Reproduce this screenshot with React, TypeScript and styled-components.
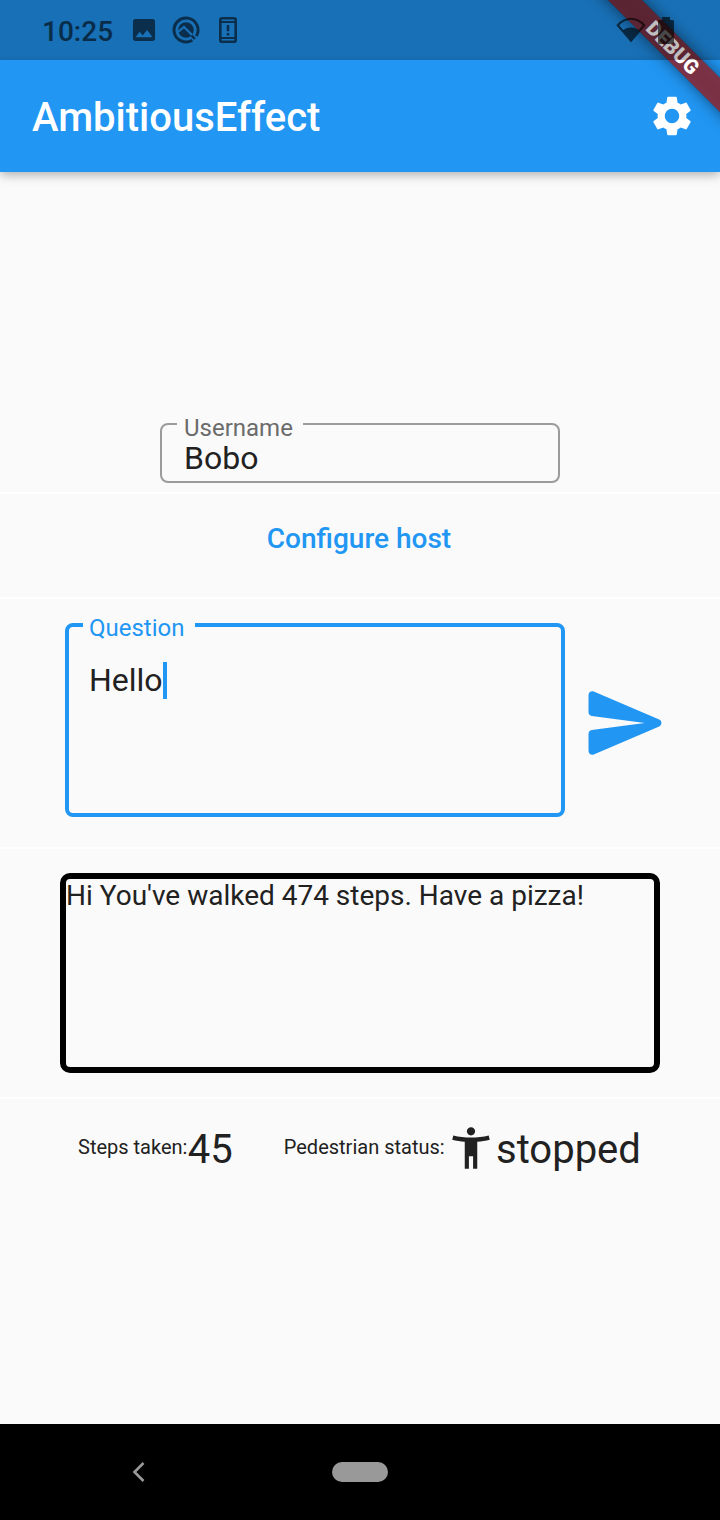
import React from 'react';
import styled, { createGlobalStyle } from 'styled-components';

const blue = '#2196f3';
const ink = '#212121';

const GlobalStyle = createGlobalStyle`
  * { box-sizing: border-box; }
  body { margin: 0; background: #fafafa; font-family: Roboto, sans-serif; color: ${ink}; }
`;

const Screen = styled.div`
  position: relative;
  width: 720px;
  height: 1520px;
  display: flex;
  flex-direction: column;
  overflow: hidden;
  background: ${blue};
`;

const StatusBar = styled.header`
  position: relative;
  z-index: 3;
  height: 60px;
  flex: none;
  display: flex;
  align-items: center;
  padding: 0 46px 0 42px;
  background: rgba(0, 0, 0, 0.25);
  color: #000;
`;

const Clock = styled.span`
  width: 90px;
  font-size: 28px;
  font-weight: 500;
  line-height: 60px;
  padding-top: 3px;
  opacity: 0.6;
`;

const StatusIcons = styled.div`
  display: flex;
  align-items: center;
  gap: 15px;
  color: #0b2e4c;
`;

const SystemIcons = styled.div`
  display: flex;
  align-items: center;
  gap: 11px;
  margin-left: auto;
  opacity: 0.62;
`;

const AppBar = styled.div`
  position: relative;
  z-index: 1;
  height: 112px;
  flex: none;
  display: flex;
  align-items: center;
  justify-content: space-between;
  padding: 0 24px 0 32px;
  background: ${blue};
  color: #fff;
  box-shadow: 0 5px 10px -1px rgba(0, 0, 0, 0.2), 0 2px 8px rgba(0, 0, 0, 0.1);
`;

const Title = styled.h1`
  margin: 0;
  font-size: 40px;
  font-weight: 500;
  line-height: 48px;
  padding-top: 3px;
`;

const Body = styled.main`
  flex: 1;
  display: flex;
  flex-direction: column;
  background: #fafafa;
`;

const Row = styled.section<{ $h: number; $indent?: number }>`
  height: ${(p) => p.$h}px;
  flex: none;
  display: flex;
  justify-content: ${(p) => (p.$indent ? 'flex-start' : 'center')};
  align-items: flex-start;
  padding-left: ${(p) => p.$indent ?? 0}px;
  border-bottom: 2px solid #fff;
`;

const Field = styled.fieldset<{ $w: number; $h: number; $line: number; $color: string; $top: number }>`
  width: ${(p) => p.$w}px;
  height: ${(p) => p.$h}px;
  min-width: 0;
  margin: ${(p) => p.$top}px 0 0;
  padding: 0 0 0 ${(p) => 24 - p.$line}px;
  border: ${(p) => p.$line}px solid ${(p) => p.$color};
  border-radius: 8px;
`;

const Legend = styled.legend<{ $w: number; $ml: number; $pad: number; $lh: number; $color: string }>`
  width: ${(p) => p.$w}px;
  height: 26px;
  margin-left: ${(p) => p.$ml}px;
  padding: 0 0 0 ${(p) => p.$pad}px;
  font-size: 24px;
  line-height: ${(p) => p.$lh}px;
  color: ${(p) => p.$color};
`;

const Value = styled.div<{ $top: number }>`
  display: flex;
  align-items: center;
  height: 38px;
  margin-top: ${(p) => p.$top}px;
  font-size: 32px;
  line-height: 38px;
`;

const Caret = styled.span`
  width: 4px;
  height: 37px;
  background: ${blue};
`;

const TextButton = styled.button`
  margin: 28px 2px 0 0;
  padding: 0;
  border: 0;
  background: none;
  color: ${blue};
  font: 500 28px/33px Roboto, sans-serif;
`;

const SendButton = styled.button`
  margin: 79px 0 0 16px;
  padding: 0;
  border: 0;
  background: none;
  display: flex;
  color: ${blue};
`;

const Answer = styled.div`
  width: 600px;
  height: 200px;
  margin-top: 24px;
  border: 6px solid #000;
  border-radius: 10px;
  font-size: 28px;
  line-height: 33px;
`;

const Stats = styled.section`
  display: flex;
  align-items: center;
  height: 98px;
  padding-left: 78px;
`;

const Stat = styled.div`
  display: flex;
  align-items: center;
  & + & { margin-left: 51px; }
`;

const StatLabel = styled.span`
  font-size: 20px;
  line-height: 24px;
  padding: 0 0.4px 2px 0;
`;

const StatValue = styled.span`
  font-size: 40px;
  line-height: 48px;
  padding-top: 4px;
`;

const StatIcon = styled.span`
  display: flex;
  margin-left: 1px;
`;

const NavBar = styled.nav`
  height: 96px;
  flex: none;
  display: flex;
  align-items: center;
  background: #000;
`;

const BackIcon = styled.svg`
  margin-left: 130px;
`;

const HomePill = styled.span`
  width: 56px;
  height: 20px;
  margin-left: 184px;
  border-radius: 10px;
  background: #999;
`;

const DebugClip = styled.div`
  position: absolute;
  z-index: 2;
  top: 0;
  right: 0;
  width: 200px;
  height: 200px;
  overflow: hidden;
`;

const DebugBanner = styled.div`
  position: absolute;
  top: 35px;
  left: 52px;
  width: 200px;
  height: 24px;
  transform: rotate(45deg);
  background:
    linear-gradient(rgba(183, 28, 28, 0.63), rgba(183, 28, 28, 0.63)),
    linear-gradient(rgba(0, 0, 0, 0.4), rgba(0, 0, 0, 0.46), rgba(0, 0, 0, 0.4));
  box-shadow: 0 0 15px rgba(0, 0, 0, 0.5);
  color: #fff;
  font-size: 20.4px;
  font-weight: 900;
  line-height: 24px;
  padding-left: 2px;
  text-align: center;
`;

const ICONS = {
  image: 'M21 19V5c0-1.1-.9-2-2-2H5c-1.1 0-2 .9-2 2v14c0 1.1.9 2 2 2h14c1.1 0 2-.9 2-2zM8.5 13.5l2.5 3.01L14.5 12l4.5 6H5l3.5-4.5z',
  settings:
    'M19.14 12.94c.04-.3.06-.61.06-.94 0-.32-.02-.64-.07-.94l2.03-1.58c.18-.14.23-.41.12-.61l-1.92-3.32c-.12-.22-.37-.29-.59-.22l-2.39.96c-.5-.38-1.03-.7-1.62-.94l-.36-2.54c-.04-.24-.24-.41-.48-.41h-3.84c-.24 0-.43.17-.47.41l-.36 2.54c-.59.24-1.13.57-1.62.94l-2.39-.96c-.22-.08-.47 0-.59.22L2.74 8.87c-.12.21-.08.47.12.61l2.03 1.58c-.05.3-.09.63-.09.94s.02.64.07.94l-2.03 1.58c-.18.14-.23.41-.12.61l1.92 3.32c.12.22.37.29.59.22l2.39-.96c.5.38 1.03.7 1.62.94l.36 2.54c.05.24.24.41.48.41h3.84c.24 0 .44-.17.47-.41l.36-2.54c.59-.24 1.13-.56 1.62-.94l2.39.96c.22.08.47 0 .59-.22l1.92-3.32c.12-.22.07-.47-.12-.61l-2.01-1.58zM12 15.6c-1.98 0-3.6-1.62-3.6-3.6s1.62-3.6 3.6-3.6 3.6 1.62 3.6 3.6-1.62 3.6-3.6 3.6z',
  send: 'M3.4 20.4l17.45-7.48c.81-.35.81-1.49 0-1.84L3.4 3.6c-.66-.29-1.39.2-1.39.91L2 9.12c0 .5.37.93.87.99L17 12 2.87 13.88c-.5.07-.87.5-.87 1l.01 4.61c0 .71.73 1.2 1.39.91z',
  person:
    'M20.5 6c-2.61.7-5.67 1-8.5 1s-5.89-.3-8.5-1L3 8c1.86.5 4 .83 6 1v13h2v-6h2v6h2V9c2-.17 4.14-.5 6-1l-.5-2zM12 6c1.1 0 2-.9 2-2s-.9-2-2-2-2 .9-2 2 .9 2 2 2z',
};

const Glyph = ({ name, size }: { name: keyof typeof ICONS; size: number }) => (
  <svg width={size} height={size} viewBox="0 0 24 24" fill="currentColor">
    <path d={ICONS[name]} />
  </svg>
);

export default function App() {
  return (
    <Screen>
      <GlobalStyle />
      <StatusBar>
        <Clock>10:25</Clock>
        <StatusIcons>
          <svg width="24" height="24" viewBox="2.2 2.2 19.6 19.6" fill="currentColor"><path d={ICONS.image} /></svg>
          <svg width="30" height="30" viewBox="0 0 30 30" fill="none">
            <path d="M21.3 25.2A12 12 0 1 1 25.4 21" stroke="currentColor" strokeWidth="3" />
            <circle cx="15" cy="15" r="7.8" fill="currentColor" />
            <path d="M7 17l6-5 12.500 12.500" stroke="#1a70b7" strokeWidth="2.2" />
            <path d="M20.500 20.500l3.500 3.500" stroke="currentColor" strokeWidth="2.4" />
          </svg>
          <svg width="24" height="28" viewBox="0 0 24 28" fill="none" stroke="currentColor">
            <rect x="4.3" y="2.3" width="15.4" height="23.4" rx="1.5" strokeWidth="2.6" />
            <path d="M4 6h16M4 22h16" strokeWidth="2" />
            <path d="M12 9v6.2M12 17v2.4" strokeWidth="2.6" />
          </svg>
        </StatusIcons>
        <SystemIcons>
          <svg width="32" height="28" viewBox="0 0 32 28">
            <path d="M2.8 9.2C10.5 .6 21.5 .6 29.2 9.2L16 24.6z" fill="none" stroke="currentColor" strokeWidth="2.2" />
            <path d="M7.5 14.6c5-4.2 12-4.2 17 0L16 26z" fill="currentColor" />
          </svg>
          <svg width="16" height="27" viewBox="0 0 16 27">
            <path d="M4 0h8v3h2.5Q16 3 16 4.500V25.500Q16 27 14.500 27h-13Q0 27 0 25.500v-21Q0 3 1.500 3H4z" fill="currentColor" />
          </svg>
        </SystemIcons>
      </StatusBar>
      <AppBar>
        <Title>AmbitiousEffect</Title>
        <Glyph name="settings" size={48} />
      </AppBar>
      <Body>
        <Row $h={322}>
          <Field $w={400} $h={72} $line={2} $color="#9b9b9b" $top={239}>
            <Legend $w={126} $ml={-7} $pad={7} $lh={34} $color="#6b6b6b">Username</Legend>
            <Value $top={2}>Bobo</Value>
          </Field>
        </Row>
        <Row $h={105}>
          <TextButton>Configure host</TextButton>
        </Row>
        <Row $h={250} $indent={65}>
          <Field $w={500} $h={205} $line={4} $color={blue} $top={13}>
            <Legend $w={112} $ml={-6} $pad={6} $lh={32} $color={blue}>Question</Legend>
            <Value $top={23}>Hello<Caret /></Value>
          </Field>
          <SendButton aria-label="Send"><Glyph name="send" size={90} /></SendButton>
        </Row>
        <Row $h={250}>
          <Answer>Hi You've walked 474 steps. Have a pizza!</Answer>
        </Row>
        <Stats>
          <Stat>
            <StatLabel>Steps taken:</StatLabel>
            <StatValue>45</StatValue>
          </Stat>
          <Stat>
            <StatLabel>Pedestrian status:</StatLabel>
            <StatIcon><Glyph name="person" size={50} /></StatIcon>
            <StatValue>stopped</StatValue>
          </Stat>
        </Stats>
      </Body>
      <NavBar>
        <BackIcon width="18" height="24" viewBox="0 0 18 24" fill="none" stroke="#999" strokeWidth="2.6">
          <path d="M13.500 3L4.500 12l9 9" />
        </BackIcon>
        <HomePill />
      </NavBar>
      <DebugClip><DebugBanner>DEBUG</DebugBanner></DebugClip>
    </Screen>
  );
}
